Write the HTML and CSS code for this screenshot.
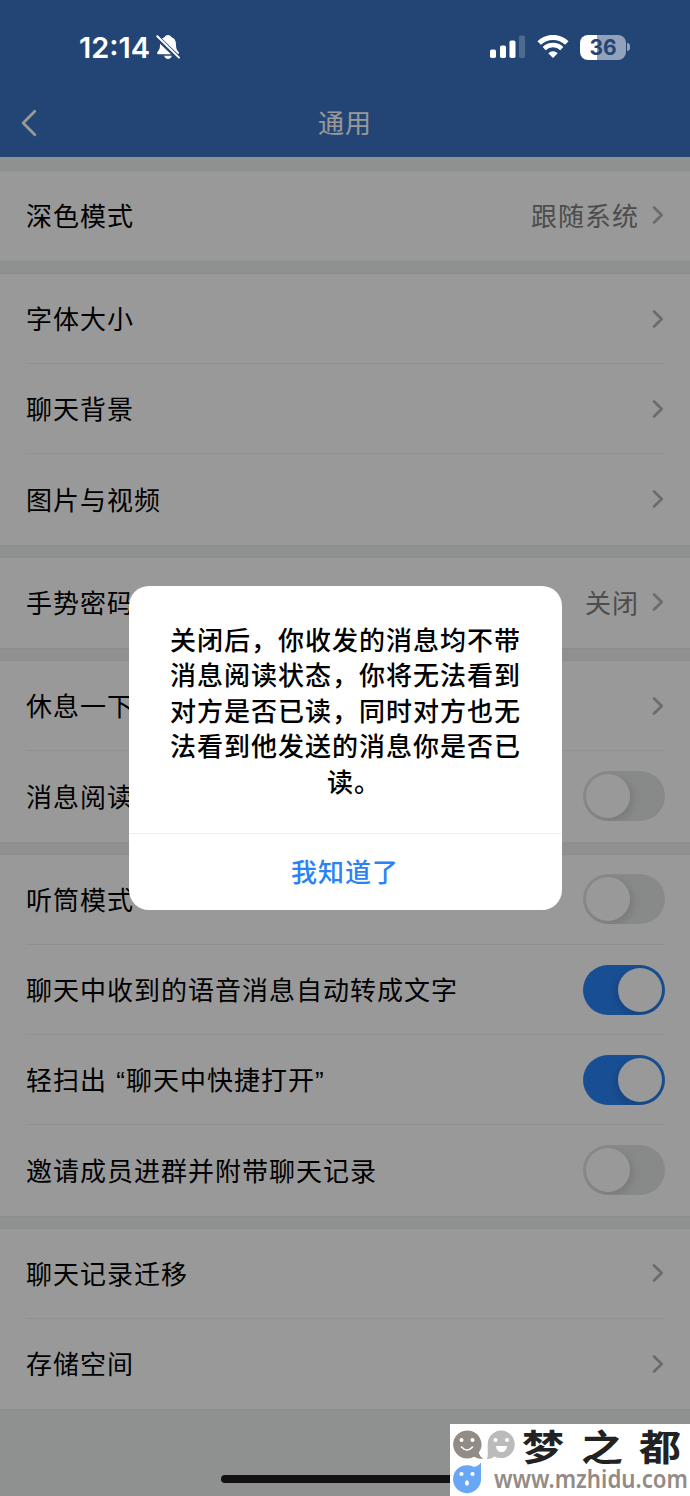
FILE: index.html
```html
<!DOCTYPE html>
<html lang="zh-CN">
<head>
    <meta charset="UTF-8">
    <title>通用</title>
    <link rel="stylesheet" href="styles.css">
</head>
<body>
    <svg width="0" height="0" class="defs">
        <symbol id="arrow" viewBox="0 0 12 20">
            <path d="M2 2.5 9.7 10 2 17.5" fill="none" stroke="currentColor" stroke-width="2.7" stroke-linecap="round" stroke-linejoin="round"/>
        </symbol>
    </svg>

    <div class="status-bar">
        <span class="time">12:14</span>
        <svg class="bell" width="24" height="26" viewBox="0 0 24 26">
            <path d="M12 1c-1.8 0-3 1-3.3 2.1C5.300 4.300 4 7 4 10.500 4 15 3 16 1.600 17.800.6 19 1 20.300 2.700 20.300h18.600c1.700 0 2.100-1.300 1.100-2.500C21 16 20 15 20 10.500c0-3.500-1.300-6.200-4.700-7.400C15 2 13.800 1 12 1z" fill="#fff"/>
            <path d="M8.200 21.800h7.600c-.4 1.900-1.800 3.200-3.800 3.200s-3.400-1.300-3.800-3.200z" fill="#fff"/>
            <path d="M.8 3 22.700 24.200" stroke="#234575" stroke-width="5"/>
            <path d="M1.300 2.300 23 23.600" stroke="#fff" stroke-width="2" stroke-linecap="round"/>
        </svg>
        <div class="status-icons">
            <svg width="36" height="24" viewBox="0 0 36 24" fill="#fff">
                <rect x="0" y="14.500" width="6" height="8.500" rx="1.700"/>
                <rect x="10" y="10.500" width="6" height="12.500" rx="1.700"/>
                <rect x="19.500" y="5.500" width="6" height="17.500" rx="1.700"/>
                <rect x="29" y="0.500" width="6" height="22.500" rx="1.700" opacity=".2"/>
            </svg>
            <svg class="wifi" width="32" height="24" viewBox="0 0 32 24" fill="none" stroke="#fff">
                <path d="M2.200 8a19.800 19.800 0 0 1 27.600 0" stroke-width="5"/>
                <path d="M7.200 13.600a12.700 12.700 0 0 1 17.600 0" stroke-width="4.400"/>
                <path d="M16 23 11.300 18.200a6.800 6.800 0 0 1 9.400 0z" fill="#fff" stroke="none"/>
            </svg>
            <div class="battery"><span>36</span></div>
            <div class="battery-cap"></div>
        </div>
    </div>

    <div class="page">
        <div class="header">
            <svg class="back" width="18" height="28" viewBox="0 0 18 28">
                <path d="M14.800 2.200 3.200 14l11.600 11.800" fill="none" stroke="#fff" stroke-width="2.800" stroke-linecap="round" stroke-linejoin="round"/>
            </svg>
            <h1>通用</h1>
        </div>

        <div class="list">
            <div class="section">
                <div class="row"><span>深色模式</span><span class="value">跟随系统</span><svg class="arrow"><use href="#arrow"/></svg></div>
            </div>
            <div class="section">
                <div class="row"><span>字体大小</span><svg class="arrow"><use href="#arrow"/></svg></div>
                <div class="row"><span>聊天背景</span><svg class="arrow"><use href="#arrow"/></svg></div>
                <div class="row"><span>图片与视频</span><svg class="arrow"><use href="#arrow"/></svg></div>
            </div>
            <div class="section">
                <div class="row"><span>手势密码</span><span class="value">关闭</span><svg class="arrow"><use href="#arrow"/></svg></div>
            </div>
            <div class="section">
                <div class="row"><span>休息一下</span><svg class="arrow"><use href="#arrow"/></svg></div>
                <div class="row"><span>消息阅读</span><div class="switch"></div></div>
            </div>
            <div class="section">
                <div class="row"><span>听筒模式</span><div class="switch"></div></div>
                <div class="row"><span>聊天中收到的语音消息自动转成文字</span><div class="switch on"></div></div>
                <div class="row"><span>轻扫出 “聊天中快捷打开”</span><div class="switch on"></div></div>
                <div class="row"><span>邀请成员进群并附带聊天记录</span><div class="switch"></div></div>
            </div>
            <div class="section">
                <div class="row"><span>聊天记录迁移</span><svg class="arrow"><use href="#arrow"/></svg></div>
                <div class="row"><span>存储空间</span><svg class="arrow"><use href="#arrow"/></svg></div>
            </div>
        </div>
    </div>

    <div class="overlay">
        <div class="dialog">
            <p>关闭后，你收发的消息均不带消息阅读状态，你将无法看到对方是否已读，同时对方也无法看到他发送的消息你是否已<span class="tail">读。</span></p>
            <button>我知道了</button>
        </div>
    </div>

    <div class="home-bar"></div>

    <div class="watermark">
        <svg width="240" height="72" viewBox="0 0 240 72">
            <path d="M17 6.500a14 14 0 1 0 7 26.200q4 2.300 9 2.300-3.400-3-4.300-6.200A14 14 0 0 0 17 6.500z" fill="#938b86"/>
            <circle cx="11.500" cy="16" r="2" fill="#fff"/>
            <circle cx="22.500" cy="16" r="2" fill="#fff"/>
            <path d="M11.500 23q5.500 6 11 0" fill="none" stroke="#fff" stroke-width="1.600" stroke-linecap="round"/>

            <path d="M51 6.500a13.800 13.800 0 1 1-6.500 26Q41 35 37 35.200q1.200-4 .7-9V20A13.800 13.800 0 0 1 51 6.500z" fill="#bbb"/>
            <circle cx="45.500" cy="16" r="2" fill="#fff"/>
            <circle cx="57" cy="16" r="2" fill="#fff"/>
            <path d="M46 22h11q-.5 6-5.500 6T46 22z" fill="#fff"/>

            <path d="M31 38.500v16a14 14 0 1 1-7-11.500q5-1.200 7-4.500z" fill="#68a6f6"/>
            <circle cx="11.500" cy="50" r="2.100" fill="#fff"/>
            <circle cx="22.500" cy="50" r="2.100" fill="#fff"/>
            <ellipse cx="17" cy="59" rx="2" ry="2.700" fill="#fff"/>

            <text class="mark-name" x="72" y="36.500" textLength="42" lengthAdjust="spacingAndGlyphs">梦</text>
            <text class="mark-name" x="131" y="36.500" textLength="42" lengthAdjust="spacingAndGlyphs">之</text>
            <text class="mark-name" x="189" y="36.500" textLength="42" lengthAdjust="spacingAndGlyphs">都</text>
            <text class="mark-url" x="44" y="64" textLength="194" lengthAdjust="spacingAndGlyphs">www.mzhidu.com</text>
        </svg>
    </div>
</body>
</html>
```

FILE: styles.css
```css
* {
    box-sizing: border-box;
}

body {
    margin: 0;
    width: 690px;
    height: 1496px;
    position: relative;
    overflow: hidden;
    background-color: #edf2ef;
    font-family: "Noto Sans", "Noto Sans CJK SC", sans-serif;
    font-size: 26px;
    letter-spacing: 1px;
    color: #000;
}

.defs {
    position: absolute;
}

/* status bar stays above the dimmed page */
.status-bar {
    position: absolute;
    top: 0;
    left: 0;
    z-index: 3;
    width: 690px;
    height: 94px;
    padding: 0 60px 0 79px;
    display: flex;
    align-items: center;
    color: #fff;
    font-family: Inter, sans-serif;
    letter-spacing: 0;
}

.time {
    font-size: 29px;
    font-weight: 600;
    width: 77px;
}

.status-icons {
    margin-left: auto;
    display: flex;
    align-items: center;
}

.wifi {
    margin: 0 11px 0 11px;
}

.battery {
    width: 46px;
    height: 25px;
    border-radius: 8px;
    background: linear-gradient(to right, #fff 17px, #91a2ba 17px);
    color: #234575;
    font-size: 21px;
    font-weight: 700;
    line-height: 25px;
    text-align: center;
}

.battery-cap {
    width: 3px;
    height: 8px;
    margin-left: 1px;
    border-radius: 0 4px 4px 0;
    background-color: #91a2ba;
}

.header {
    height: 157px;
    padding: 89px 20px 0;
    display: grid;
    grid-template-columns: 60px 1fr 60px;
    align-items: center;
    background-color: #3a73c3;
    color: #fff;
}

.header h1 {
    margin: 0 0 3px;
    font-size: 26px;
    font-weight: 400;
    text-align: center;
}

.list {
    padding-top: 13.6px;
    display: flex;
    flex-direction: column;
    gap: 13.1px;
}

.section {
    background-color: #fff;
    box-shadow: 0 0 0 1px #e8ecea;
}

.row {
    height: 90.25px;
    margin: 0 26px;
    display: flex;
    align-items: center;
    border-bottom: 1px solid #f0f1f1;
    font-family: "Liberation Sans", "Noto Sans CJK SC", sans-serif;
    word-spacing: 1px;
}

.row:last-child {
    border-bottom-color: transparent;
}

.row > span {
    margin-bottom: 2px;
}

.row > :last-child {
    margin-left: auto;
}

.row .value {
    margin-left: auto;
    color: #7f8083;
}

.row .value + .arrow {
    margin-left: 13px;
}

.arrow {
    width: 12px;
    height: 20px;
    color: #b4b4b4;
}

.switch {
    width: 82px;
    height: 50px;
    margin-right: -1px;
    padding: 3px;
    border-radius: 25px;
    background-color: #e3e6e4;
    display: flex;
    overflow: hidden;
}

.switch::before {
    content: "";
    width: 44px;
    height: 44px;
    border-radius: 50%;
    background-color: #fff;
    box-shadow: 3px 3px 8px rgba(0, 0, 0, 0.12);
}

.switch.on {
    background-color: #2983f5;
    justify-content: flex-end;
}

.switch.on::before {
    box-shadow: -2px 3px 8px rgba(0, 0, 0, 0.15);
}

.overlay {
    position: absolute;
    top: 0;
    left: 0;
    z-index: 2;
    width: 100%;
    height: 100%;
    background-color: rgba(0, 0, 0, 0.4);
    display: flex;
    justify-content: center;
    align-items: center;
}

.dialog {
    width: 433px;
    height: 324px;
    border-radius: 20px;
    background-color: #fff;
    display: flex;
    flex-direction: column;
}

.dialog p {
    flex: 1;
    margin: 0;
    padding: 37px 40px 0 41px;
    font-weight: 500;
    line-height: 35.4px;
    text-align: center;
}

/* balances the empty half of the full stop on the last line */
.dialog .tail {
    padding-left: 17px;
}

.dialog button {
    height: 77px;
    padding: 0 0 2px;
    border: none;
    border-top: 1px solid #eeefef;
    background: none;
    color: #2983f5;
    font: inherit;
    font-weight: 500;
    letter-spacing: 1px;
}

.home-bar {
    position: absolute;
    left: 221px;
    bottom: 13px;
    z-index: 3;
    width: 248px;
    height: 8px;
    border-radius: 4px;
    background-color: #111;
}

.watermark {
    position: absolute;
    right: 0;
    bottom: 0;
    z-index: 4;
    width: 240px;
    height: 72px;
    background-color: #fff;
    letter-spacing: 0;
}

.watermark svg {
    display: block;
    overflow: visible;
}

.mark-name {
    font-family: "Noto Sans CJK SC", sans-serif;
    font-size: 36px;
    font-weight: 700;
    fill: #222;
}

.mark-url {
    font-family: "Noto Sans", sans-serif;
    font-size: 25px;
    font-weight: 600;
    fill: #938b86;
}
```
